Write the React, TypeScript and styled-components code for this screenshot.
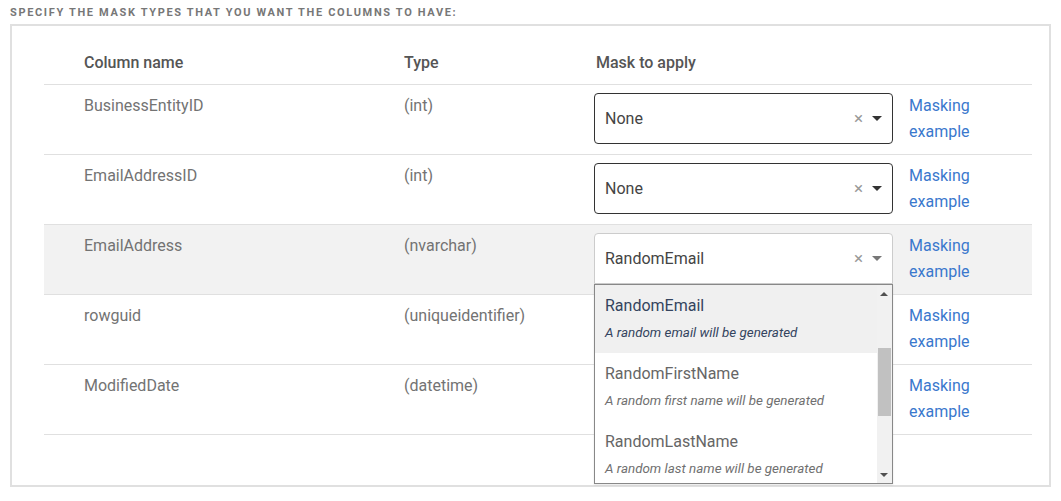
import React from "react";
import styled, { createGlobalStyle } from "styled-components";

const Global = createGlobalStyle`
  html, body { margin: 0; padding: 0; background: #fff; }
  body { font-family: Roboto, "Noto Sans", Arial, sans-serif; }
  * { box-sizing: border-box; }
`;

const Page = styled.div`
  width: 1061px;
  height: 501px;
  padding: 0 10px;
  overflow: hidden;
`;

const Title = styled.div`
  font-size: 11px;
  font-weight: 700;
  letter-spacing: 1.65px;
  color: #777;
  line-height: 13px;
  padding-top: 6px;
  height: 24px;
  text-transform: uppercase;
  white-space: nowrap;
`;

const Panel = styled.div`
  border: 2px solid #e0e0e0;
  width: 1041px;
  padding: 14px 17px 50px 32px;
`;

const Row = styled.div<{ $highlight?: boolean; $header?: boolean }>`
  display: grid;
  grid-template-columns: 360px 190px 299px 1fr;
  height: ${(p) => (p.$header ? "45px" : "70px")};
  border-bottom: 1px solid #e0e0e0;
  background: ${(p) => (p.$highlight ? "#f2f2f2" : "transparent")};
  padding-top: ${(p) => (p.$header ? "0" : "8px")};
  align-items: ${(p) => (p.$header ? "center" : "start")};
`;

const HeadCell = styled.div<{ $indent?: number }>`
  font-size: 16px;
  font-weight: 500;
  color: #555;
  padding-left: ${(p) => p.$indent ?? 0}px;
  padding-top: 1px;
`;

const Cell = styled.div<{ $indent?: number }>`
  font-size: 16px;
  line-height: 26px;
  color: #737373;
  padding-left: ${(p) => p.$indent ?? 0}px;
`;

const SelectWrap = styled.div`
  position: relative;
`;

const SelectBox = styled.div<{ $open?: boolean }>`
  height: 51px;
  border: 1px solid ${(p) => (p.$open ? "#cccccc" : "#333333")};
  border-radius: ${(p) => (p.$open ? "4px 4px 0 0" : "4px")};
  background: #fff;
  display: flex;
  align-items: center;
  padding: 0 10px 0 10px;
  font-size: 16px;
  color: #444;
`;

const SelectValue = styled.span`
  flex: 1;
`;

const Clear = styled.span`
  color: #999;
  font-size: 17px;
  line-height: 1;
  margin-right: 9px;
`;

const Arrow = styled.span<{ $open?: boolean }>`
  width: 0;
  height: 0;
  border-left: 5px solid transparent;
  border-right: 5px solid transparent;
  border-top: 5px solid ${(p) => (p.$open ? "#777" : "#333")};
`;

const LinkCell = styled.a`
  padding-left: 16px;
  font-size: 16px;
  line-height: 26px;
  color: #3a78cd;
  text-decoration: none;
  width: 96px;
  display: block;
`;

const Menu = styled.div`
  position: absolute;
  top: 51px;
  left: 0;
  width: 299px;
  height: 200px;
  border: 1px solid #888;
  background: #fff;
  display: flex;
  z-index: 5;
  box-shadow: 0 1px 2px rgba(0, 0, 0, 0.1);
`;

const Options = styled.div`
  flex: 1;
  overflow: hidden;
`;

const Option = styled.div<{ $active?: boolean }>`
  height: 68px;
  padding: 10px 10px 0 10px;
  background: ${(p) => (p.$active ? "#f0f0f0" : "#fff")};
`;

const OptTitle = styled.div<{ $active?: boolean }>`
  font-size: 16px;
  line-height: 22px;
  color: ${(p) => (p.$active ? "#34445e" : "#666")};
`;

const OptDesc = styled.div<{ $active?: boolean }>`
  font-size: 13.4px;
  font-style: italic;
  line-height: 20px;
  margin-top: 6px;
  color: ${(p) => (p.$active ? "#34445e" : "#707070")};
  white-space: nowrap;
`;

const Scrollbar = styled.div`
  width: 15px;
  background: #f1f1f1;
  position: relative;
`;

const ScrollArrow = styled.div<{ $up?: boolean }>`
  width: 0;
  height: 0;
  border-left: 4px solid transparent;
  border-right: 4px solid transparent;
  ${(p) =>
    p.$up ? "border-bottom: 4px solid #505050;" : "border-top: 4px solid #505050;"}
  position: absolute;
  left: 3px;
  ${(p) => (p.$up ? "top: 7px;" : "bottom: 6px;")}
`;

const Thumb = styled.div`
  position: absolute;
  top: 63px;
  left: 1px;
  width: 13px;
  height: 68px;
  background: #c1c1c1;
`;

const rows = [
  { name: "BusinessEntityID", type: "(int)", mask: "None" },
  { name: "EmailAddressID", type: "(int)", mask: "None" },
  { name: "EmailAddress", type: "(nvarchar)", mask: "RandomEmail", open: true },
  { name: "rowguid", type: "(uniqueidentifier)" },
  { name: "ModifiedDate", type: "(datetime)" },
];

const options = [
  { t: "RandomEmail", d: "A random email will be generated", active: true },
  { t: "RandomFirstName", d: "A random first name will be generated" },
  { t: "RandomLastName", d: "A random last name will be generated" },
];

export default function App() {
  return (
    <Page>
      <Global />
      <Title>Specify the mask types that you want the columns to have:</Title>
      <Panel>
        <Row $header>
          <HeadCell $indent={40}>Column name</HeadCell>
          <HeadCell>Type</HeadCell>
          <HeadCell $indent={2}>Mask to apply</HeadCell>
          <div />
        </Row>
        {rows.map((r) => (
          <Row key={r.name} $highlight={r.open}>
            <Cell $indent={40}>{r.name}</Cell>
            <Cell>{r.type}</Cell>
            <SelectWrap>
              {r.mask ? (
                <SelectBox $open={r.open}>
                  <SelectValue>{r.mask}</SelectValue>
                  <Clear>×</Clear>
                  <Arrow $open={r.open} />
                </SelectBox>
              ) : null}
              {r.open ? (
                <Menu>
                  <Options>
                    {options.map((o) => (
                      <Option key={o.t} $active={o.active}>
                        <OptTitle $active={o.active}>{o.t}</OptTitle>
                        <OptDesc $active={o.active}>{o.d}</OptDesc>
                      </Option>
                    ))}
                  </Options>
                  <Scrollbar>
                    <ScrollArrow $up />
                    <Thumb />
                    <ScrollArrow />
                  </Scrollbar>
                </Menu>
              ) : null}
            </SelectWrap>
            <LinkCell href="#">Masking example</LinkCell>
          </Row>
        ))}
      </Panel>
    </Page>
  );
}
